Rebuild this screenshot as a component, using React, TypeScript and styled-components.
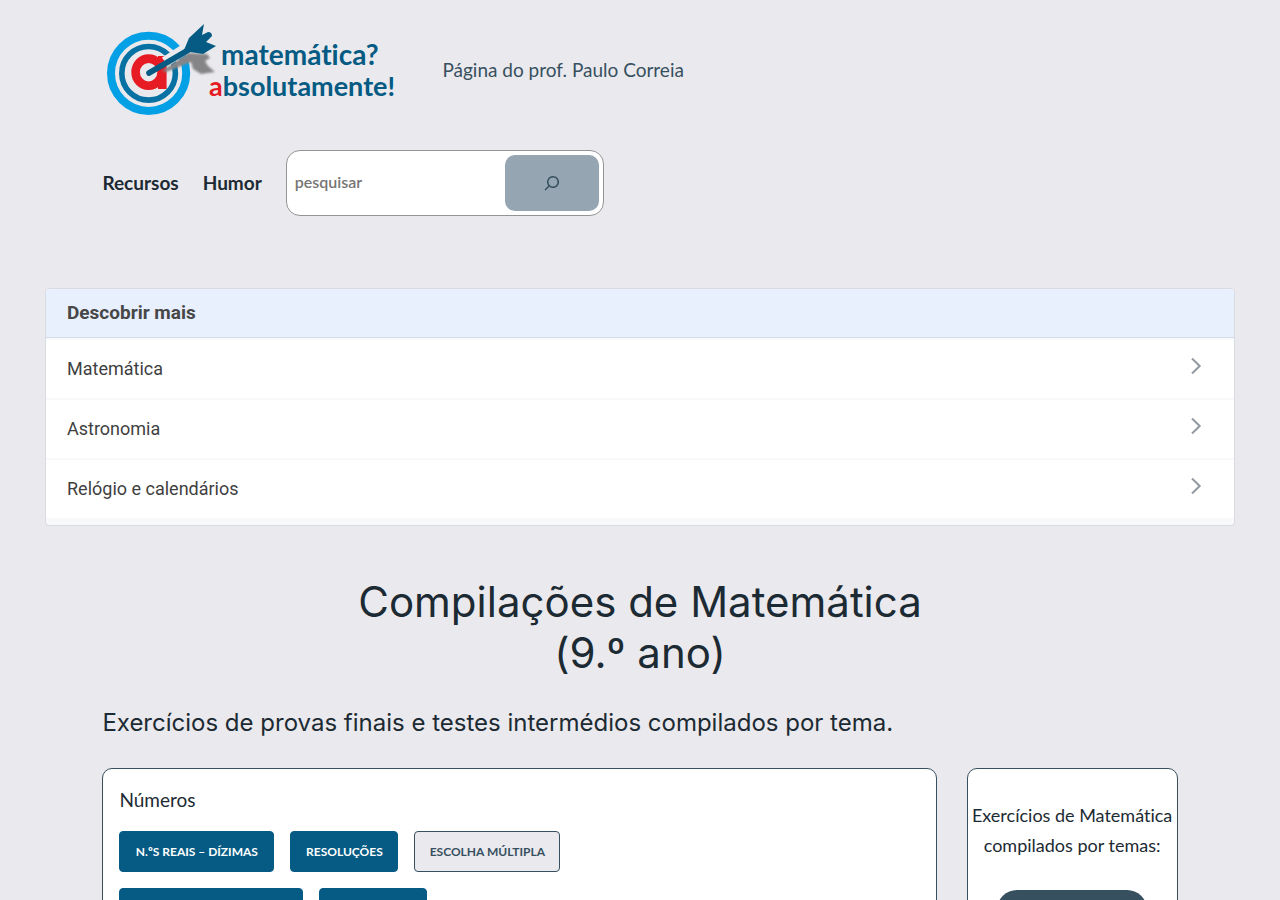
import React from "react";
import styled, { createGlobalStyle } from "styled-components";

const ink = "#1c2a33";
const slate = "#37505f";
const blue = "#055b83";

const GlobalStyle = createGlobalStyle`
  *, *::before, *::after { box-sizing: border-box; }
  body {
    margin: 0;
    background: #eae9ed;
    color: ${ink};
    font-family: Lato, "Liberation Sans", sans-serif;
    font-size: 18px;
    font-variant-ligatures: none;
  }
`;

const Header = styled.header`
  padding: 20px 8% 0;
`;

const Brand = styled.div`
  display: flex;
  align-items: center;
  gap: 40px;
`;

const LogoLink = styled.a`
  display: block;
  line-height: 0;
`;

const Tagline = styled.p`
  margin: 0;
  color: ${slate};
  font-size: 19px;
  line-height: 30px;
`;

const Nav = styled.nav`
  display: flex;
  align-items: center;
  gap: 24px;
  margin-top: 30px;
`;

const NavLink = styled.a`
  color: ${ink};
  font-size: 19px;
  font-weight: 700;
  line-height: 30px;
  text-decoration: none;
`;

const SearchForm = styled.form`
  display: flex;
  width: 318px;
  height: 66px;
  padding: 4px;
  border: 1px solid #949494;
  border-radius: 14px;
  background: #fff;
`;

const SearchInput = styled.input`
  flex: 1;
  min-width: 0;
  padding: 0 4px 4px;
  border: 0;
  outline: 0;
  background: transparent;
  color: ${ink};
  font-family: inherit;
  font-size: 16px;
  font-weight: 600;
  &::placeholder { color: #757575; }
`;

const SearchButton = styled.button`
  display: flex;
  align-items: center;
  justify-content: center;
  width: 94px;
  border: 0;
  border-radius: 10px;
  background: #95a5b1;
  color: ${slate};
`;

const Discover = styled.section`
  margin: 72px 45px 0;
  padding-bottom: 7px;
  overflow: hidden;
  border: 1px solid #d9dbe3;
  border-radius: 4px;
  background: #f8f9fa;
  font-family: Roboto, sans-serif;
  color: #474747;
`;

const DiscoverTitle = styled.h2`
  margin: 0 0 2px;
  padding: 0 21px;
  border-bottom: 1px solid #d5dae3;
  background: #e8effd;
  font-size: 19px;
  font-weight: 700;
  line-height: 48px;
`;

const DiscoverList = styled.ul`
  display: flex;
  flex-direction: column;
  gap: 2px;
  margin: 0;
  padding: 0;
  list-style: none;
`;

const DiscoverLink = styled.a`
  display: flex;
  align-items: center;
  justify-content: space-between;
  height: 58px;
  padding: 0 28px 2px 21px;
  background: #fff;
  color: #3f3f3f;
  font-size: 18px;
  text-decoration: none;
  svg { margin-bottom: 4px; }
`;

const Main = styled.main`
  padding: 50px 8% 40px;
`;

const Title = styled.h1`
  max-width: 650px;
  margin: 0 auto;
  font-family: Inter, sans-serif;
  font-size: 42px;
  font-weight: 400;
  line-height: 51px;
  text-align: center;
`;

const Subtitle = styled.p`
  margin: 27px 0;
  font-family: Inter, sans-serif;
  font-size: 24px;
  line-height: 36px;
`;

const Columns = styled.div`
  display: grid;
  grid-template-columns: minmax(0, 1fr) 211px;
  gap: 30px;
`;

const Card = styled.section`
  border: 1px solid ${slate};
  border-radius: 10px;
  background: #fff;
`;

const Topic = styled(Card)`
  padding: 16px;
`;

const TopicTitle = styled.h3`
  margin: 0 0 16px;
  font-size: 19px;
  font-weight: 400;
  line-height: 30px;
`;

const ButtonRow = styled.div`
  display: flex;
  flex-wrap: wrap;
  gap: 16px;
  margin-bottom: 16px;
`;

const TopicLink = styled.a<{ $outline?: boolean; $width: number }>`
  display: flex;
  align-items: center;
  justify-content: center;
  min-width: ${(p) => p.$width}px;
  height: 41px;
  border: 1px solid ${(p) => (p.$outline ? slate : blue)};
  border-radius: 4px;
  background: ${(p) => (p.$outline ? "#eae9ed" : blue)};
  color: ${(p) => (p.$outline ? slate : "#fff")};
  font-size: 12px;
  font-weight: 700;
  text-decoration: none;
  text-transform: uppercase;
`;

const Aside = styled(Card)`
  display: flex;
  flex-direction: column;
  align-items: center;
  padding-top: 31px;
`;

const AsideText = styled.p`
  margin: 0 0 30px;
  font-size: 18px;
  line-height: 30px;
  text-align: center;
  white-space: nowrap;
`;

const AsideLink = styled.a`
  width: 150px;
  height: 48px;
  border-radius: 20px;
  background: ${slate};
`;

function Logo() {
  return (
    <svg width="300" height="100" viewBox="0 0 300 100" role="img" aria-label="matemática? absolutamente!">
      <defs>
        <filter id="soft" x="-10%" y="-10%" width="120%" height="120%">
          <feGaussianBlur stdDeviation="0.8" />
        </filter>
      </defs>
      <circle cx="46.6" cy="53.3" r="37.6" fill="none" stroke="#04a0e5" strokeWidth="8" />
      <circle cx="46.6" cy="53.3" r="26.8" fill="none" stroke="#0871a4" strokeWidth="5.6" />
      <ellipse cx="46.6" cy="52.2" rx="13" ry="13.6" fill="none" stroke="#e61b23" strokeWidth="8.6" />
      <path d="M56 36h8.6v33H56z" fill="#e61b23" />
      <path d="M63 42L86 27" stroke="#eae9ed" strokeWidth="11" />
      <path d="M60 51L86 33L105 34L108 38L103 41L106 46L113 52L99 54L91 49L89 42L64 52z" fill="#858588" filter="url(#soft)" />
      <path d="M47 53L88 29" stroke={blue} strokeWidth="5.6" strokeLinecap="round" />
      <path d="M82 30L87 18L102 4L100 15L106 12Q110 12 110 16L104 22L114 26L101 34L88 32z" fill={blue} />
      <g fontFamily="Lato, sans-serif" fontSize="27" fontWeight="700" fill={blue}>
        <text x="119" y="45" fontSize="28">matemática?</text>
        <text x="107" y="76"><tspan fill="#e61b23">a</tspan>bsolutamente!</text>
      </g>
    </svg>
  );
}

function Chevron() {
  return (
    <svg width="20" height="20" viewBox="0 0 20 20" fill="none" stroke="#9299a1" strokeWidth="2" aria-hidden="true">
      <path d="M6 2.5L13.7 10L6 17.5" />
    </svg>
  );
}

function SearchIcon() {
  return (
    <svg width="24" height="24" viewBox="0 0 24 24" fill="currentColor" aria-hidden="true">
      <path d="M13 5c-3.300 0-6 2.700-6 6 0 1.400.5 2.700 1.300 3.700l-3.800 3.800 1.100 1.100 3.800-3.800c1 .8 2.300 1.300 3.700 1.300 3.300 0 6-2.700 6-6S16.300 5 13 5zm0 10.500c-2.500 0-4.500-2-4.500-4.500s2-4.500 4.500-4.500 4.500 2 4.500 4.500-2 4.500-4.500 4.500z" />
    </svg>
  );
}

const related = ["Matemática", "Astronomia", "Relógio e calendários"];

export default function App() {
  return (
    <>
      <GlobalStyle />
      <Header>
        <Brand>
          <LogoLink href="#"><Logo /></LogoLink>
          <Tagline>Página do prof. Paulo Correia</Tagline>
        </Brand>
        <Nav>
          <NavLink href="#">Recursos</NavLink>
          <NavLink href="#">Humor</NavLink>
          <SearchForm role="search">
            <SearchInput type="search" placeholder="pesquisar" aria-label="pesquisar" />
            <SearchButton type="button" aria-label="pesquisar"><SearchIcon /></SearchButton>
          </SearchForm>
        </Nav>
      </Header>
      <Discover>
        <DiscoverTitle>Descobrir mais</DiscoverTitle>
        <DiscoverList>
          {related.map((name) => (
            <li key={name}>
              <DiscoverLink href="#">{name}<Chevron /></DiscoverLink>
            </li>
          ))}
        </DiscoverList>
      </Discover>
      <Main>
        <Title>Compilações de Matemática<br />(9.º ano)</Title>
        <Subtitle>Exercícios de provas finais e testes intermédios compilados por tema.</Subtitle>
        <Columns>
          <Topic>
            <TopicTitle>Números</TopicTitle>
            <ButtonRow>
              <TopicLink href="#" $width={155}>N.ºs reais – dízimas</TopicLink>
              <TopicLink href="#" $width={108}>Resoluções</TopicLink>
              <TopicLink href="#" $width={146} $outline>Escolha múltipla</TopicLink>
            </ButtonRow>
            <ButtonRow>
              <TopicLink href="#" $width={184} aria-label="Números" />
              <TopicLink href="#" $width={108} aria-label="Resoluções" />
            </ButtonRow>
          </Topic>
          <Aside>
            <AsideText>Exercícios de Matemática<br />compilados por temas:</AsideText>
            <AsideLink href="#" aria-label="Temas" />
          </Aside>
        </Columns>
      </Main>
    </>
  );
}
